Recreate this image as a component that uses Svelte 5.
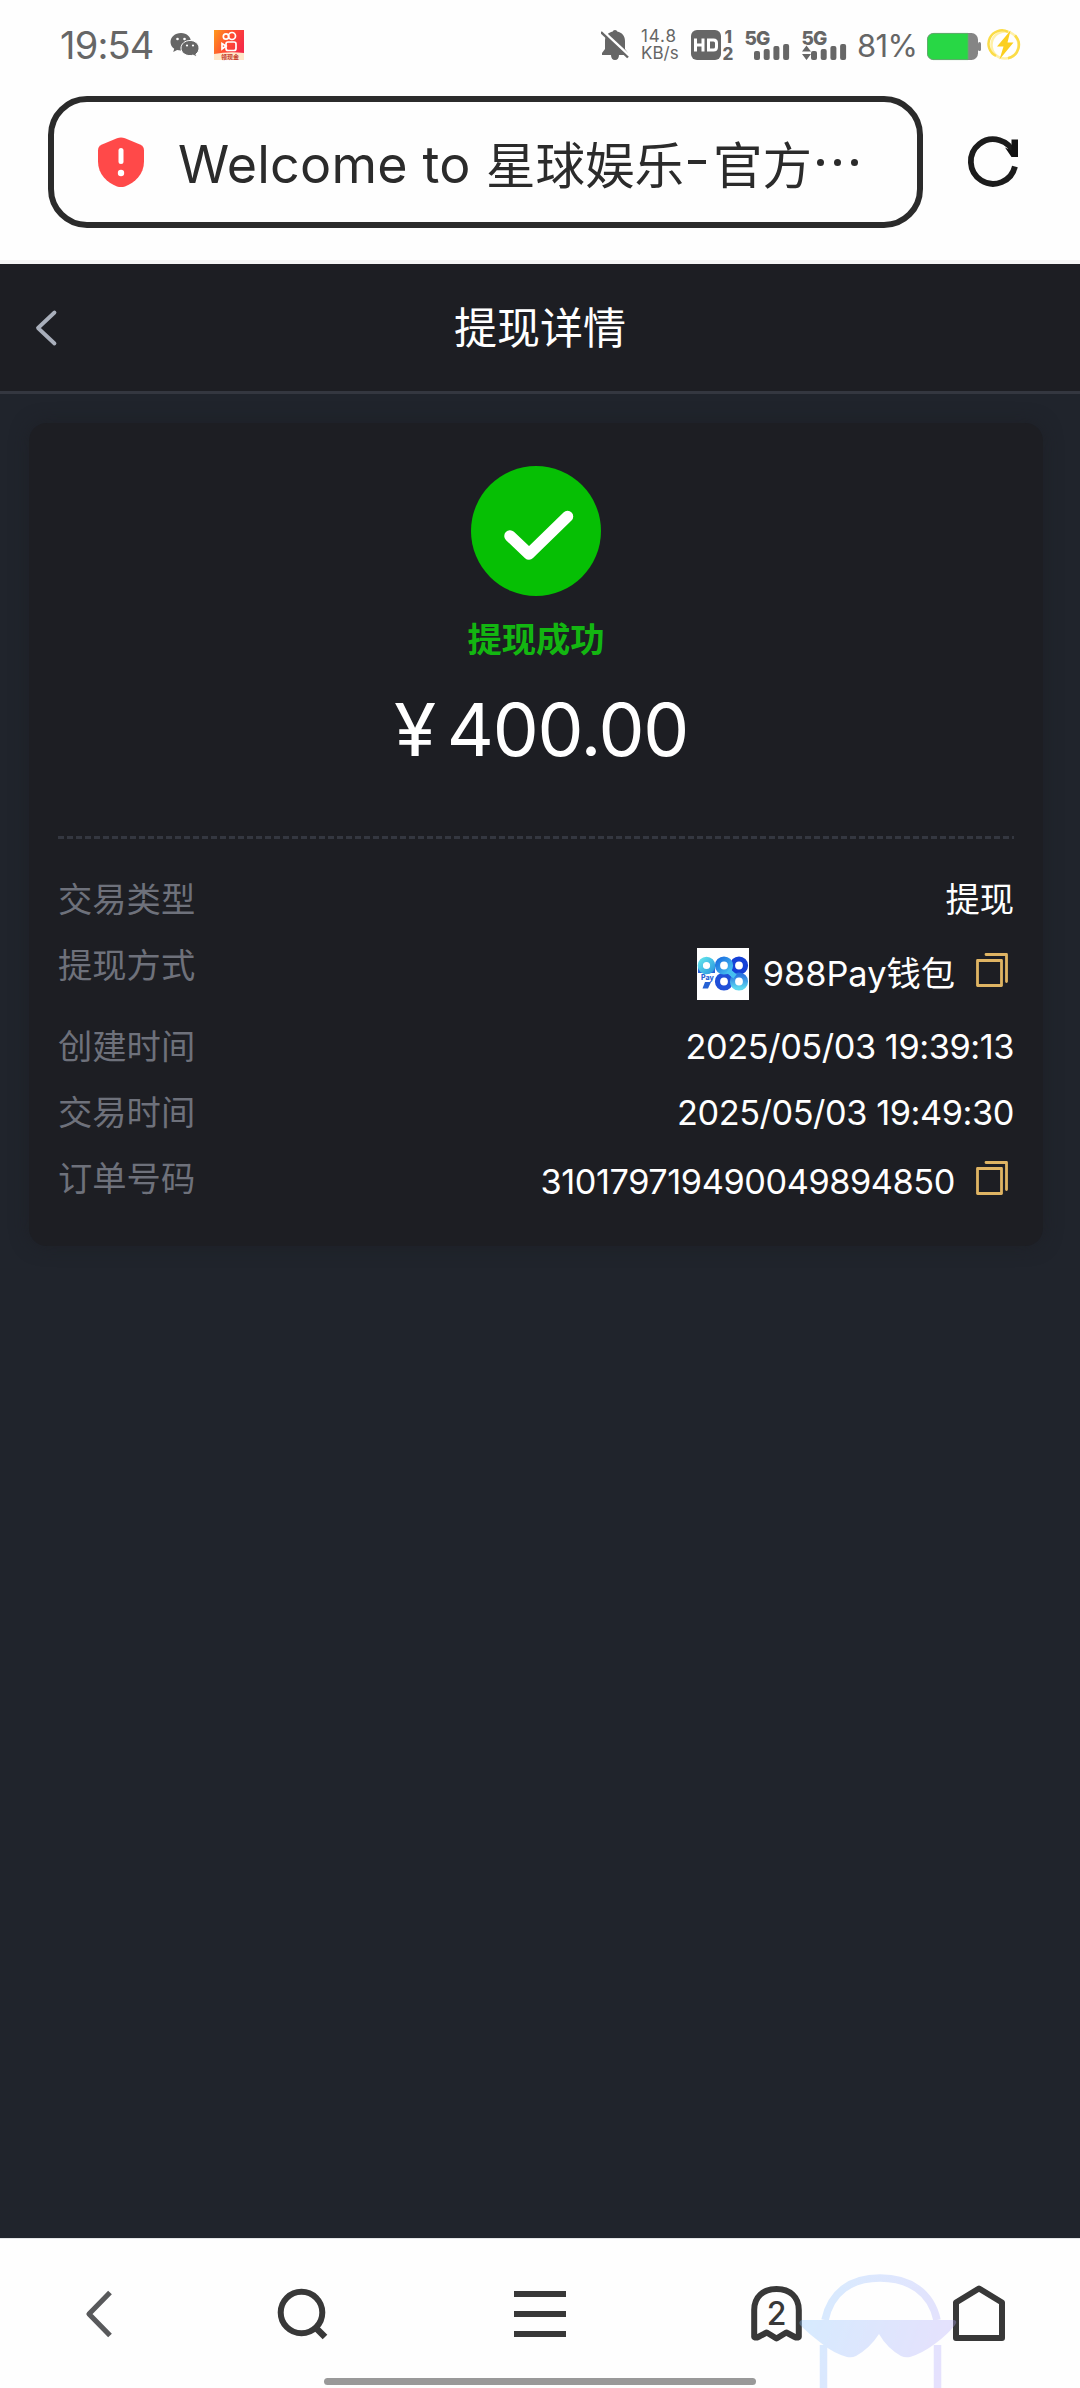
<script>
	const address = 'Welcome to ';
	const signal = [9, 11, 14, 16];

	let order = {
		status: '提现成功',
		amount: '400.00'
	};

	let rows = [
		{ id: 1, label: '交易类型', value: '提现' },
		{ id: 2, label: '提现方式', value: '988Pay钱包', logo: true, copy: true },
		{ id: 3, label: '创建时间', value: '2025/05/03 19:39:13', number: true },
		{ id: 4, label: '交易时间', value: '2025/05/03 19:49:30', number: true },
		{ id: 5, label: '订单号码', value: '310179719490049894850', copy: true, number: true, low: true }
	];

	function copyText(text) {
		navigator.clipboard.writeText(text);
	}
</script>

<div class="screen">
	<div class="status">
		<span class="time">19:54</span>
		<svg class="wechat" width="30" height="30" viewBox="0 0 30 30">
			<path fill="#666" d="M11 3C4.900 3 0.500 7 0.500 12c0 2.900 1.500 5.200 3.700 6.800l-1 3.200 3.900-2c1.200.3 2.500.5 3.900.5C17 20.500 21 17 21 12S17 3 11 3z"/>
			<path fill="#666" stroke="#fff" stroke-width="1" d="M20 10.500c-5 0-9 3.300-9 7.600s4 7.500 9 7.500c1 0 2.100-.2 3-.5l3.700 1.900-.8-2.900c2-1.400 3.100-3.500 3.100-6 0-4.300-4-7.600-9-7.600z"/>
			<g fill="#fff">
				<circle cx="7.500" cy="9" r="1.300"/><circle cx="14.500" cy="9" r="1.300"/>
				<circle cx="17" cy="15.500" r="1.100"/><circle cx="23" cy="15.500" r="1.100"/>
			</g>
		</svg>
		<svg class="video" width="30" height="30" viewBox="0 0 30 30">
			<defs>
				<linearGradient id="video-bg" x1="0" y1="0" x2="1" y2=".5">
					<stop offset="0" stop-color="#ff9a1c"/>
					<stop offset=".55" stop-color="#ff4b33"/>
					<stop offset="1" stop-color="#f52a48"/>
				</linearGradient>
			</defs>
			<rect width="30" height="30" fill="url(#video-bg)"/>
			<g fill="none" stroke="#fff" stroke-width="1.700">
				<circle cx="12" cy="6.500" r="2.700"/><circle cx="18" cy="6" r="3.500"/>
				<rect x="12" y="12" width="10" height="8.500" rx="2"/>
				<path d="M12 16l-4-2.500v5.500z"/>
			</g>
			<path d="M0 24q15-3 30-1v7H0z" fill="#ffe7c9"/>
			<text x="16" y="29" class="tiny" text-anchor="middle">领现金</text>
		</svg>

		<span class="fill"></span>

		<svg class="bell" width="28" height="30" viewBox="0 0 28 30">
			<path fill="#666" d="M14 0c1.500 0 2 .8 2.200 1.600C21 2.500 24 6 24 11v8l3 4v2H18c0 3-1.500 5-4 5s-4-2-4-5H1v-2l3-4v-8c0-5 3-8.500 7.800-9.400C12 .800 12.500 0 14 0z"/>
			<path d="M1 .5l28 26" stroke="#fff" stroke-width="3"/>
			<path d="M0 2l27 25.500" stroke="#666" stroke-width="2.400"/>
		</svg>
		<div class="speed"><span>14.8</span><span>KB/s</span></div>
		<svg class="hd" width="43" height="30" viewBox="0 0 43 30">
			<rect width="30" height="30" rx="6" fill="#666"/>
			<g fill="none" stroke="#fff" stroke-width="3">
				<path d="M4.500 8.500v13M12 8.500v13M4.500 15h7.500M17.500 10v10h5q3 0 3-3v-4q0-3-3-3z"/>
			</g>
			<text x="33.500" y="13" class="sim">1</text>
			<text x="31.500" y="29.500" class="sim">2</text>
		</svg>
		{#each [false, true] as data}
			<svg class="signal" width="44" height="30" viewBox="0 0 44 30">
				<text x="-.5" y="14.500" class="net">5G</text>
				{#if data}
					<path fill="#666" d="M4.500 15.500l4.500 6H0zM4.500 30L0 24h9z"/>
				{/if}
				{#each signal as h, i}
					<rect x={9 + i * 9.7} y={30 - h} width="6" height={h} rx="2" fill="#666"/>
				{/each}
			</svg>
		{/each}
		<span class="percent">81%</span>
		<svg class="battery" width="54" height="27" viewBox="0 0 54 27">
			<rect width="51" height="27" rx="6.500" fill="#858585"/>
			<rect x="51" y="9" width="3" height="9" rx="1.500" fill="#858585"/>
			<path fill="#28d745" stroke="#5fae6c" stroke-width=".8" d="M6.500.4H41v26.200H6.500a6 6 0 0 1-6-6V6.500a6 6 0 0 1 6-6z"/>
		</svg>
		<svg class="charge" width="30" height="30" viewBox="0 0 30 30">
			<circle cx="15" cy="15" r="13.500" fill="none" stroke="#fff0a8" stroke-width="2.500"/>
			<path d="M6 26A13.500 13.500 0 0 1 18 1.800M25 5.500a13.500 13.500 0 0 1-7 22.700" fill="none" stroke="#fbdc48" stroke-width="2.500"/>
			<path fill="#fbcf1f" d="M20.500.5L7 16.500h6.500L9.500 29.500 23.500 12.500h-6z"/>
		</svg>
	</div>

	<div class="browser">
		<div class="address">
			<svg width="46" height="50" viewBox="0 0 46 50">
				<path fill="#ff4949" d="M19 1.200q4-1.600 8 0l15 6.300q4 1.700 4 6v11C46 37 37 46 27 49.400q-4 1.200-8 0C9 46 0 37 0 24.500v-11q0-4.300 4-6z"/>
				<path d="M23 13.500v11" stroke="#fff" stroke-width="5" stroke-linecap="round"/>
				<circle cx="23" cy="36" r="3.200" fill="#fff"/>
			</svg>
			<span class="latin">{address}</span><span class="site">星球娱乐</span><span class="dash"></span><span class="site">官方</span>
			<span class="dots"><i></i><i></i><i></i></span>
		</div>
		<svg class="reload" width="52" height="54" viewBox="0 0 52 54">
			<path d="M46.300 19.500A22.300 22.300 0 1 0 46.900 31.500" fill="none" stroke="#1c1c1c" stroke-width="5.800"/>
			<path d="M43.500 4.500H50V22H43.500L37 12.500l6.500 3z" fill="#111"/>
		</svg>
	</div>

	<header>
		<svg width="24" height="38" viewBox="0 0 24 38">
			<path d="M20.500 3.500L4 19l16.500 15.500" fill="none" stroke="#a9afbb" stroke-width="3.800" stroke-linecap="round" stroke-linejoin="round"/>
		</svg>
		<h1>提现详情</h1>
	</header>

	<main>
		<div class="card">
			<div class="result">
				<svg width="130" height="130" viewBox="0 0 130 130">
					<circle cx="65" cy="65" r="65" fill="#06bf04"/>
					<path d="M39 70l19 18 38.500-37.500" fill="none" stroke="#fff" stroke-width="11.500" stroke-linecap="round" stroke-linejoin="round"/>
				</svg>
				<p class="state">{order.status}</p>
				<p class="amount"><span class="yen">¥</span>{order.amount}</p>
			</div>
			<div class="divider"></div>
			{#each rows as row (row.id)}
				<div class="row" class:tall={row.logo} class:low={row.low}>
					<span class="label">{row.label}</span>
					<div class="value">
						{#if row.logo}
							<svg class="logo" width="52" height="52" viewBox="0 0 52 52">
								<defs>
									<linearGradient id="nine" x1="0" y1="0" x2="1" y2="1">
										<stop offset="0" stop-color="#5fe0ea"/>
										<stop offset="1" stop-color="#2f9fe0"/>
									</linearGradient>
									<linearGradient id="eight" x1="0" y1="0" x2="1" y2="1">
										<stop offset="0" stop-color="#1c6fe0"/>
										<stop offset="1" stop-color="#45bff0"/>
									</linearGradient>
									<linearGradient id="last" x1="0" y1="0" x2="0" y2="1">
										<stop offset="0" stop-color="#2a74e0"/>
										<stop offset="1" stop-color="#5cd8f0"/>
									</linearGradient>
								</defs>
								<rect width="52" height="52" fill="#fff"/>
								<path d="M1 17v8h17v-8z" fill="#2b62d8"/>
								<circle cx="9.500" cy="17.500" r="4" fill="#fff"/>
								<g fill="none" stroke-width="5.200">
									<circle cx="9.500" cy="17.500" r="6.200" stroke="url(#nine)"/>
									<circle cx="27" cy="33.500" r="6.500" stroke="#1f4fd8"/>
									<circle cx="42" cy="17.500" r="6.500" stroke="#1440d6"/>
									<circle cx="27" cy="17.500" r="6.500" stroke="url(#eight)"/>
									<circle cx="42" cy="33.500" r="6.500" stroke="url(#last)"/>
									<path d="M31 22.500l7 6" stroke="#45bff0" stroke-width="5"/>
								</g>
								<path fill="#2762d4" d="M8 34h6l-3 6.500H5.500z"/>
								<text x="4" y="32" class="pay">Pay</text>
							</svg>
						{/if}
						<span class:number={row.number}>{row.value}</span>
						{#if row.copy}
							<button aria-label="copy" on:click={() => copyText(row.value)}>
								<svg width="32" height="34" viewBox="0 0 32 34">
									<path d="M1.500 7.500h24v25h-24zM10 1.500h20.500V28.500" fill="none" stroke="#dfb463" stroke-width="2.800" stroke-linejoin="round" stroke-linecap="round"/>
								</svg>
							</button>
						{/if}
					</div>
				</div>
			{/each}
		</div>
	</main>

	<nav>
		<svg width="28" height="48" viewBox="0 0 28 48">
			<path d="M25 2.500L4 24l21 21.500" fill="none" stroke="#58595b" stroke-width="5.200" stroke-linejoin="round"/>
		</svg>
		<svg width="52" height="52" viewBox="0 0 52 52">
			<circle cx="24.500" cy="24.500" r="20.800" fill="none" stroke="#383838" stroke-width="6"/>
			<path d="M39 40l9 9" stroke="#383838" stroke-width="6.500"/>
		</svg>
		<svg width="52" height="46" viewBox="0 0 52 46">
			<path d="M0 3h52M0 23h52M0 43h52" stroke="#383838" stroke-width="6"/>
		</svg>
		<svg width="51" height="56" viewBox="0 0 51 56">
			<path d="M3.200 51V24C3.200 11 12 3 25.500 3s22.300 8 22.300 21v27q-2 1-4 0l-8.500-4.500-9.800 6-9.800-6L7.200 51q-2 1-4 0z" fill="none" stroke="#383838" stroke-width="6" stroke-linejoin="round"/>
			<text x="25.500" y="39" class="tabs" text-anchor="middle">2</text>
		</svg>
		<svg width="52" height="57" viewBox="0 0 52 57">
			<path d="M3 17.500L26 3.500l23 14V53H3z" fill="none" stroke="#383838" stroke-width="6" stroke-linejoin="round"/>
		</svg>

		<svg class="ghost" width="160" height="116" viewBox="0 0 160 116">
			<defs>
				<linearGradient id="ghost-fill" gradientUnits="userSpaceOnUse" x1="0" y1="30" x2="150" y2="80">
					<stop offset="0" stop-color="#86c6ff"/>
					<stop offset="1" stop-color="#b4a8fb"/>
				</linearGradient>
			</defs>
			<g opacity=".33">
				<path d="M26 48C32 20 52 6 81 6s51 14 57 42M24.500 73v43M138.500 73v43" fill="none" stroke="url(#ghost-fill)" stroke-width="7.500"/>
				<path fill="url(#ghost-fill)" d="M3 48h152q4 1 1 5-7 9-19 18-13 10-26 14-5 1-9-1-14-8-22-22-9 14-23 22-4 2-9 1-14-4-26-14Q10 62 1 53q-2-4 2-5z"/>
			</g>
		</svg>
		<div class="handle"></div>
	</nav>
</div>

<style>
	:global(body) {
		background-color: #fff;
	}

	.screen {
		display: flex;
		flex-direction: column;
		width: 1080px;
		height: 2388px;
		overflow: hidden;
		font-family: Inter, "Noto Sans CJK SC", sans-serif;
		font-size: 34.3px;
		background-color: #fefefe;
	}

	svg {
		display: block;
		flex: none;
		overflow: visible;
	}

	h1, p { margin: 0 }

	.status {
		display: flex;
		align-items: center;
		box-sizing: border-box;
		height: 90px;
		padding: 0 60px 0 60px;
		color: #666;
		white-space: nowrap;
	}

	.time {
		width: 110px;
		font-size: 38px;
		line-height: 90px;
		letter-spacing: -0.8px;
	}

	.video { margin-left: 14px }

	.fill { flex: 1 }

	.tiny {
		font-size: 6px;
		font-weight: 700;
		fill: #c33b2c;
	}

	.bell { overflow: hidden }

	.speed {
		display: flex;
		flex-direction: column;
		width: 38px;
		margin: 0 12px 0 12px;
		font-size: 17px;
		line-height: 17px;
	}

	.speed span:first-child { letter-spacing: 0.9px }

	.sim {
		font-size: 17px;
		font-weight: 800;
		fill: #666;
	}

	.net {
		font-size: 19px;
		font-weight: 800;
		fill: #666;
		letter-spacing: -1px;
	}

	.signal { margin-left: 11px }

	.signal + .signal { margin-left: 13px }

	.percent {
		width: 70px;
		margin-left: 11px;
		font-size: 31px;
		letter-spacing: -0.6px;
	}

	.battery { margin-top: 3px }

	.charge { margin-left: 9px }

	.browser {
		display: flex;
		align-items: center;
		box-sizing: border-box;
		height: 174px;
		padding: 0 60px 26px 48px;
		border-bottom: 4px solid #f4f4f4;
	}

	.address {
		display: flex;
		align-items: center;
		box-sizing: border-box;
		width: 876px;
		height: 132px;
		padding-left: 44px;
		border: 6px solid #2b2b2b;
		border-radius: 39px;
		color: #2b2b2b;
		white-space: pre;
	}

	.latin {
		width: 308px;
		margin: 4px 0 0 34px;
		font-size: 52px;
		letter-spacing: 0.2px;
	}

	.site {
		font-size: 49.5px;
	}

	.dash {
		width: 18px;
		height: 4px;
		margin: 0 7px 0 4px;
		background-color: #2b2b2b;
	}

	.dots {
		display: flex;
		gap: 10px;
		margin-left: 5px;
	}

	.dots i {
		width: 7px;
		height: 7px;
		border-radius: 50%;
		background-color: #2b2b2b;
	}

	.reload { margin-left: 45px }

	header {
		display: grid;
		grid-template-columns: 60px 1fr 60px;
		align-items: center;
		height: 127px;
		border-bottom: 3px solid #343740;
		background-color: #1d1e23;
	}

	header svg { margin-left: 34px }

	h1 {
		font-size: 43px;
		font-weight: 400;
		line-height: 60px;
		text-align: center;
		color: #fff;
	}

	main {
		flex: 1;
		padding: 29px 37px 0 29px;
		background-color: #20242c;
	}

	.card {
		box-sizing: border-box;
		height: 823px;
		padding: 43px 29px 0;
		border-radius: 18px;
		background-color: #1d1e23;
		box-shadow: 0 0 18px rgba(29, 30, 35, 0.6);
	}

	.result {
		display: flex;
		flex-direction: column;
		align-items: center;
		height: 370px;
	}

	.state {
		margin-top: 18px;
		font-weight: 700;
		line-height: 52px;
		color: #13b611;
	}

	.amount {
		display: flex;
		margin: 19px 0 0 11px;
		font-size: 73px;
		font-weight: 400;
		line-height: 90px;
		letter-spacing: -1.2px;
		color: #fff;
	}

	.yen {
		margin-right: 13px;
		transform: scaleX(1.05);
	}

	.divider {
		height: 3px;
		margin-bottom: 28px;
		background: repeating-linear-gradient(90deg, #343740 0 6px, transparent 6px 9px);
	}

	.row {
		display: flex;
		justify-content: space-between;
		height: 66px;
		line-height: 66px;
	}

	.row.tall { height: 81px }

	.label { color: #6e717b }

	.value {
		display: flex;
		align-items: center;
		height: 66px;
		color: #fff;
	}

	.number { letter-spacing: -0.43px }

	.tall .value {
		height: 81px;
	}

	.low .value {
		height: 71px;
	}

	.logo { margin-right: 14px }

	.pay {
		font-size: 7px;
		font-weight: 800;
		fill: #2762d4;
	}

	button {
		margin: 0 6px 7px 21px;
		padding: 0;
		border: none;
		background: none;
	}

	nav {
		position: relative;
		display: flex;
		align-items: center;
		box-sizing: border-box;
		height: 150px;
		padding: 0 75px 0 85px;
		border-top: 1px solid #e4e6e8;
		background-color: #fefefe;
	}

	nav > svg:nth-child(2) { margin-left: 164px }
	nav > svg:nth-child(3) { margin-left: 185px }
	nav > svg:nth-child(4) { margin-left: 185px }
	nav > svg:nth-child(5) { margin-left: 151px }

	.tabs {
		font-size: 32px;
		font-weight: 500;
		fill: #383838;
	}

	.ghost {
		position: absolute;
		left: 799px;
		bottom: 0;
	}

	.handle {
		position: absolute;
		left: 324px;
		bottom: 3px;
		width: 432px;
		height: 7px;
		border-radius: 4px;
		background-color: #999;
	}
</style>
